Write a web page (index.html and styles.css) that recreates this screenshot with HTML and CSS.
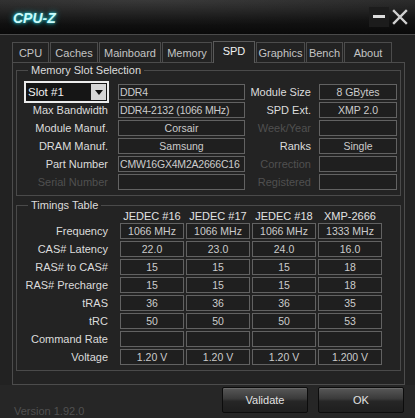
FILE: index.html
```html
<!DOCTYPE html>
<html lang="en">
<head>
    <meta charset="UTF-8">
    <meta name="viewport" content="width=device-width, initial-scale=1.0">
    <title>CPU-Z</title>
    <link rel="stylesheet" href="styles.css">
</head>
<body>
    <div class="window">
        <header class="titlebar">
            <span class="app-title">CPU-Z</span>
            <div class="win-controls">
                <span class="win-btn minimize">
                    <svg width="20" height="20" viewBox="0 0 20 20">
                        <rect x="4" y="8" width="12" height="3" fill="#dcdcdc"/>
                    </svg>
                </span>
                <span class="win-btn close">
                    <svg width="16" height="16" viewBox="0 0 16 16" stroke="#d0d0d0" stroke-width="2.4" stroke-linecap="square">
                        <path d="M2 2L14 14M14 2L2 14"/>
                    </svg>
                </span>
            </div>
        </header>

        <nav class="tabs">
            <span class="tab">CPU</span>
            <span class="tab">Caches</span>
            <span class="tab">Mainboard</span>
            <span class="tab">Memory</span>
            <span class="tab active">SPD</span>
            <span class="tab">Graphics</span>
            <span class="tab">Bench</span>
            <span class="tab">About</span>
        </nav>

        <section class="panel">
            <fieldset class="group">
                <legend>Memory Slot Selection</legend>
                <div class="slot-grid">
                    <div class="slot-select">
                        <span class="slot-value">Slot #1</span>
                        <span class="slot-arrow">
                            <svg width="8" height="5" viewBox="0 0 8 5"><path d="M0 0H8L4 5Z" fill="#111"/></svg>
                        </span>
                    </div>
                    <div class="field left">DDR4</div>
                    <span class="label">Module Size</span>
                    <div class="field">8 GBytes</div>

                    <span class="label">Max Bandwidth</span>
                    <div class="field left">DDR4-2132 (1066 MHz)</div>
                    <span class="label">SPD Ext.</span>
                    <div class="field">XMP 2.0</div>

                    <span class="label">Module Manuf.</span>
                    <div class="field">Corsair</div>
                    <span class="label disabled">Week/Year</span>
                    <div class="field"></div>

                    <span class="label">DRAM Manuf.</span>
                    <div class="field">Samsung</div>
                    <span class="label">Ranks</span>
                    <div class="field">Single</div>

                    <span class="label">Part Number</span>
                    <div class="field left">CMW16GX4M2A2666C16</div>
                    <span class="label disabled">Correction</span>
                    <div class="field"></div>

                    <span class="label disabled">Serial Number</span>
                    <div class="field"></div>
                    <span class="label disabled">Registered</span>
                    <div class="field"></div>
                </div>
            </fieldset>

            <fieldset class="group timings-group">
                <legend>Timings Table</legend>
                <div class="timings">
                    <span></span>
                    <span class="col-head">JEDEC #16</span>
                    <span class="col-head">JEDEC #17</span>
                    <span class="col-head">JEDEC #18</span>
                    <span class="col-head">XMP-2666</span>

                    <span class="label">Frequency</span>
                    <div class="field">1066 MHz</div>
                    <div class="field">1066 MHz</div>
                    <div class="field">1066 MHz</div>
                    <div class="field">1333 MHz</div>

                    <span class="label">CAS# Latency</span>
                    <div class="field">22.0</div>
                    <div class="field">23.0</div>
                    <div class="field">24.0</div>
                    <div class="field">16.0</div>

                    <span class="label">RAS# to CAS#</span>
                    <div class="field">15</div>
                    <div class="field">15</div>
                    <div class="field">15</div>
                    <div class="field">18</div>

                    <span class="label">RAS# Precharge</span>
                    <div class="field">15</div>
                    <div class="field">15</div>
                    <div class="field">15</div>
                    <div class="field">18</div>

                    <span class="label">tRAS</span>
                    <div class="field">36</div>
                    <div class="field">36</div>
                    <div class="field">36</div>
                    <div class="field">35</div>

                    <span class="label">tRC</span>
                    <div class="field">50</div>
                    <div class="field">50</div>
                    <div class="field">50</div>
                    <div class="field">53</div>

                    <span class="label">Command Rate</span>
                    <div class="field"></div>
                    <div class="field"></div>
                    <div class="field"></div>
                    <div class="field"></div>

                    <span class="label">Voltage</span>
                    <div class="field">1.20 V</div>
                    <div class="field">1.20 V</div>
                    <div class="field">1.20 V</div>
                    <div class="field">1.200 V</div>
                </div>
            </fieldset>
        </section>

        <footer class="footer">
            <span class="version">Version 1.92.0</span>
            <button class="action-button">Validate</button>
            <button class="action-button">OK</button>
        </footer>
    </div>
</body>
</html>
```

FILE: styles.css
```css
:root {
    --window-bg: #222222;
    --panel-bg: #232323;
    --line-color: #4c4c4c;
    --field-border: #626262;
    --text-color: #dadada;
    --muted-color: #505050;
}

body {
    margin: 0;
    padding: 0;
    width: 415px;
    height: 418px;
    overflow: hidden;
    background-color: var(--window-bg);
    color: var(--text-color);
    font-family: "Liberation Sans", Arial, sans-serif;
    font-size: 11px;
}

.window {
    display: flex;
    flex-direction: column;
    height: 418px;
}

/* Title bar */
.titlebar {
    height: 34px;
    border-bottom: 1px solid #4a4a4a;
    display: flex;
    align-items: center;
    justify-content: space-between;
    padding: 0 7px 0 13px;
    background:
        radial-gradient(ellipse 380px 26px at 150px 0, rgba(255, 255, 255, 0.09), rgba(255, 255, 255, 0) 100%),
        linear-gradient(to bottom, #262626 0%, #141414 55%, #090909 100%);
}

.app-title {
    font-size: 14px;
    font-weight: bold;
    font-style: italic;
    color: #c9fbfb;
    text-shadow: 0 0 3px #2fd6e0, 0 0 6px rgba(0, 220, 235, 0.7);
    margin-top: 2px;
}

.win-controls {
    display: flex;
    align-items: center;
    gap: 1px;
}

.win-btn {
    display: flex;
    align-items: center;
    justify-content: center;
}

.win-btn.minimize {
    width: 20px;
    height: 20px;
    background: #1c1c1c;
}

.win-btn.close {
    width: 16px;
    height: 16px;
    margin-left: 2px;
}

/* Tabs */
.tabs {
    display: grid;
    grid-template-columns: 37px 48px 62px 50px 42px 49px 37px 48px;
    column-gap: 1px;
    align-items: end;
    height: 22px;
    margin: 5px 0 0 12px;
}

.tab {
    height: 18px;
    border: 1px solid var(--line-color);
    border-bottom: none;
    display: flex;
    align-items: center;
    justify-content: center;
    color: #c4c4c4;
    font-size: 11px;
    padding-top: 1px;
}

.tab.active {
    position: relative;
    z-index: 1;
    height: 22px;
    margin-bottom: -1px;
    align-items: flex-start;
    padding-top: 3px;
    box-sizing: border-box;
    background: var(--panel-bg);
    border-color: #5a5a5a;
    color: #f2f2f2;
}

/* Panel */
.panel {
    margin: 0 10px 0 12px;
    border: 1px solid var(--line-color);
    background: var(--panel-bg);
    padding: 0 3px 13px 3px;
}

.group {
    margin: 1px 0 0 0;
    padding: 8px 3px 5px 7px;
    border: 1px solid #4a4a4a;
    min-width: 0;
}

.group legend {
    margin-left: 4px;
    padding: 0 3px;
    line-height: 12px;
    font-size: 11px;
    color: #dcdcdc;
}

.timings-group {
    margin-top: 3px;
    padding-top: 0;
}

.slot-grid {
    display: grid;
    grid-template-columns: 94px 127px 74px 78px;
    grid-auto-rows: 16px;
    row-gap: 2px;
    align-items: center;
}

.label {
    text-align: right;
    padding-right: 10px;
    white-space: nowrap;
    font-size: 11px;
    color: #dcdcdc;
}

.slot-grid .label:nth-child(4n+3) {
    padding-right: 8px;
}

.label.disabled {
    color: var(--muted-color);
}

.field {
    height: 16px;
    box-sizing: border-box;
    border: 1px solid var(--field-border);
    background: #1f1f1f;
    color: #cccccc;
    text-align: center;
    line-height: 14px;
    white-space: nowrap;
    overflow: hidden;
    font-size: 10.5px;
}

.field.left {
    text-align: left;
    padding-left: 1px;
    letter-spacing: -0.2px;
}

.slot-select {
    width: 85px;
    height: 22px;
    margin: -3px 0;
    box-sizing: border-box;
    border: 2px solid #ececec;
    background: #151515;
    display: flex;
    align-items: center;
    justify-content: space-between;
    padding: 0 1px 0 2px;
}

.slot-value {
    font-size: 11.5px;
    color: #f0f0f0;
}

.slot-arrow {
    width: 15px;
    height: 16px;
    background: #d6d6d6;
    display: flex;
    align-items: center;
    justify-content: center;
}

/* Timings table */
.timings {
    display: grid;
    grid-template-columns: 94px repeat(4, 64px);
    grid-template-rows: 10px repeat(8, 16px);
    column-gap: 2px;
    row-gap: 2px;
    align-items: center;
}

.col-head {
    text-align: center;
    line-height: 10px;
    font-size: 11px;
    color: #e2e2e2;
    white-space: nowrap;
}

/* Footer */
.footer {
    flex: 1;
    display: flex;
    align-items: flex-start;
    padding: 2px 11px 0 14px;
    background: #262626;
}

.version {
    flex: 1;
    margin-top: 18px;
    color: var(--muted-color);
    font-size: 11px;
}

.action-button {
    width: 86px;
    height: 26px;
    margin-left: 10px;
    border: 1px solid #0c0c0c;
    border-radius: 2px;
    background: linear-gradient(to bottom, #585858 0%, #3a3a3a 45%, #262626 55%, #1e1e1e 100%);
    box-shadow: inset 0 1px 0 rgba(255, 255, 255, 0.12);
    color: #e2e2e2;
    font-family: "Liberation Sans", Arial, sans-serif;
    font-size: 11px;
    cursor: pointer;
}

.action-button:first-of-type {
    margin-left: 0;
}
```
